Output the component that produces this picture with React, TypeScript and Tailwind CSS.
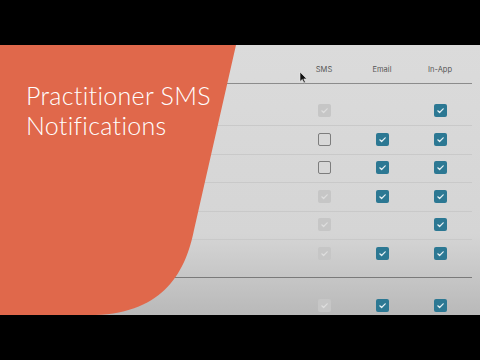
import React from 'react';

type Mark = 'on' | 'off' | 'locked' | 'none';

const rows: { sms: Mark; email: Mark; inApp: Mark; cls: string }[] = [
  { sms: 'locked', email: 'none', inApp: 'on', cls: 'h-[42px] pt-[19.5px] border-b border-[#c9c9c9]' },
  { sms: 'off', email: 'on', inApp: 'on', cls: 'h-[28.5px] pt-[6.5px] border-b border-[#c9c9c9]' },
  { sms: 'off', email: 'on', inApp: 'on', cls: 'h-[28.5px] pt-[6.5px] border-b border-[#c9c9c9]' },
  { sms: 'locked', email: 'on', inApp: 'on', cls: 'h-[28.5px] pt-[6.5px] border-b border-[#c9c9c9]' },
  { sms: 'locked', email: 'none', inApp: 'on', cls: 'h-[28.5px] pt-[6.5px] border-b border-[#c9c9c9]' },
  { sms: 'locked', email: 'on', inApp: 'on', cls: 'h-[38px] pt-[6.5px] border-b border-[#7a7a7a]' },
  { sms: 'locked', email: 'on', inApp: 'on', cls: 'h-[37px] pt-[20.5px]' },
];

const Check = ({ color }: { color: string }) => (
  <svg viewBox="0 0 13 13" className="w-[13px] h-[13px]">
    <path d="M3.8 6.8 L5.6 8.5 L9.2 4.8" fill="none" stroke={color} strokeWidth="1.2" strokeLinecap="round" strokeLinejoin="round" />
  </svg>
);

const Box = ({ mark }: { mark: Mark }) => {
  if (mark === 'none') return <div className="w-[13px] h-[13px]" />;
  if (mark === 'off')
    return <div className="w-[13px] h-[13px] rounded-[2px] border-[1.5px] border-[#7d7d7d]" />;
  if (mark === 'locked')
    return (
      <div className="w-[13px] h-[13px] rounded-[2px] bg-[#c6c6c6]">
        <Check color="#dedede" />
      </div>
    );
  return (
    <div className="w-[13px] h-[13px] rounded-[2px] bg-[#2c7893]">
      <Check color="#e8f2f5" />
    </div>
  );
};

const Cell = ({ children }: { children: React.ReactNode }) => (
  <div className="w-[58px] flex justify-center">{children}</div>
);

export default function App() {
  return (
    <div className="w-[480px] h-[360px] bg-black flex flex-col overflow-hidden">
      <div className="h-[45px] shrink-0" />
      <div className="relative h-[270px] shrink-0 overflow-hidden bg-linear-to-b from-[#dbdbdb] via-[#d5d5d5] via-70% to-[#b9b9b9]">
        {/* notification table */}
        <div className="w-[472px] flex flex-col">
          <div className="h-[39px] flex items-end pb-[9px] border-b border-[#8c8c8c] text-[7.5px] leading-[8px] text-[#555] font-['Inter',sans-serif]">
            <div className="flex-1" />
            <Cell>SMS</Cell>
            <Cell>Email</Cell>
            <Cell>In-App</Cell>
            <div className="w-[3px]" />
          </div>
          {rows.map((r, i) => (
            <div key={i} className={`flex items-start shrink-0 ${r.cls}`}>
              <div className="flex-1" />
              <Cell><Box mark={r.sms} /></Cell>
              <Cell><Box mark={r.email} /></Cell>
              <Cell><Box mark={r.inApp} /></Cell>
              <div className="w-[3px]" />
            </div>
          ))}
        </div>

        {/* orange title panel */}
        <svg className="absolute left-0 top-0" width="240" height="270" viewBox="0 0 240 270">
          <path d="M0 0 L236 0 L194 185 C186 225 165 268 95 270 L0 270 Z" fill="#e0684b" />
        </svg>
        <h1 className="absolute left-[26px] top-[35px] text-white text-[25px] leading-[30px] tracking-[0.3px] font-light font-['Lato',sans-serif]">
          Practitioner SMS
          <br />
          Notifications
        </h1>

        {/* mouse pointer */}
        <svg className="absolute left-[299px] top-[26px]" width="9" height="13" viewBox="0 0 9 13">
          <path d="M1 1 L1 10.5 L3.3 8.4 L5 12 L6.4 11.3 L4.8 7.9 L7.8 7.9 Z" fill="#111" stroke="#eee" strokeWidth="0.6" />
        </svg>
      </div>
      <div className="flex-1" />
    </div>
  );
}
